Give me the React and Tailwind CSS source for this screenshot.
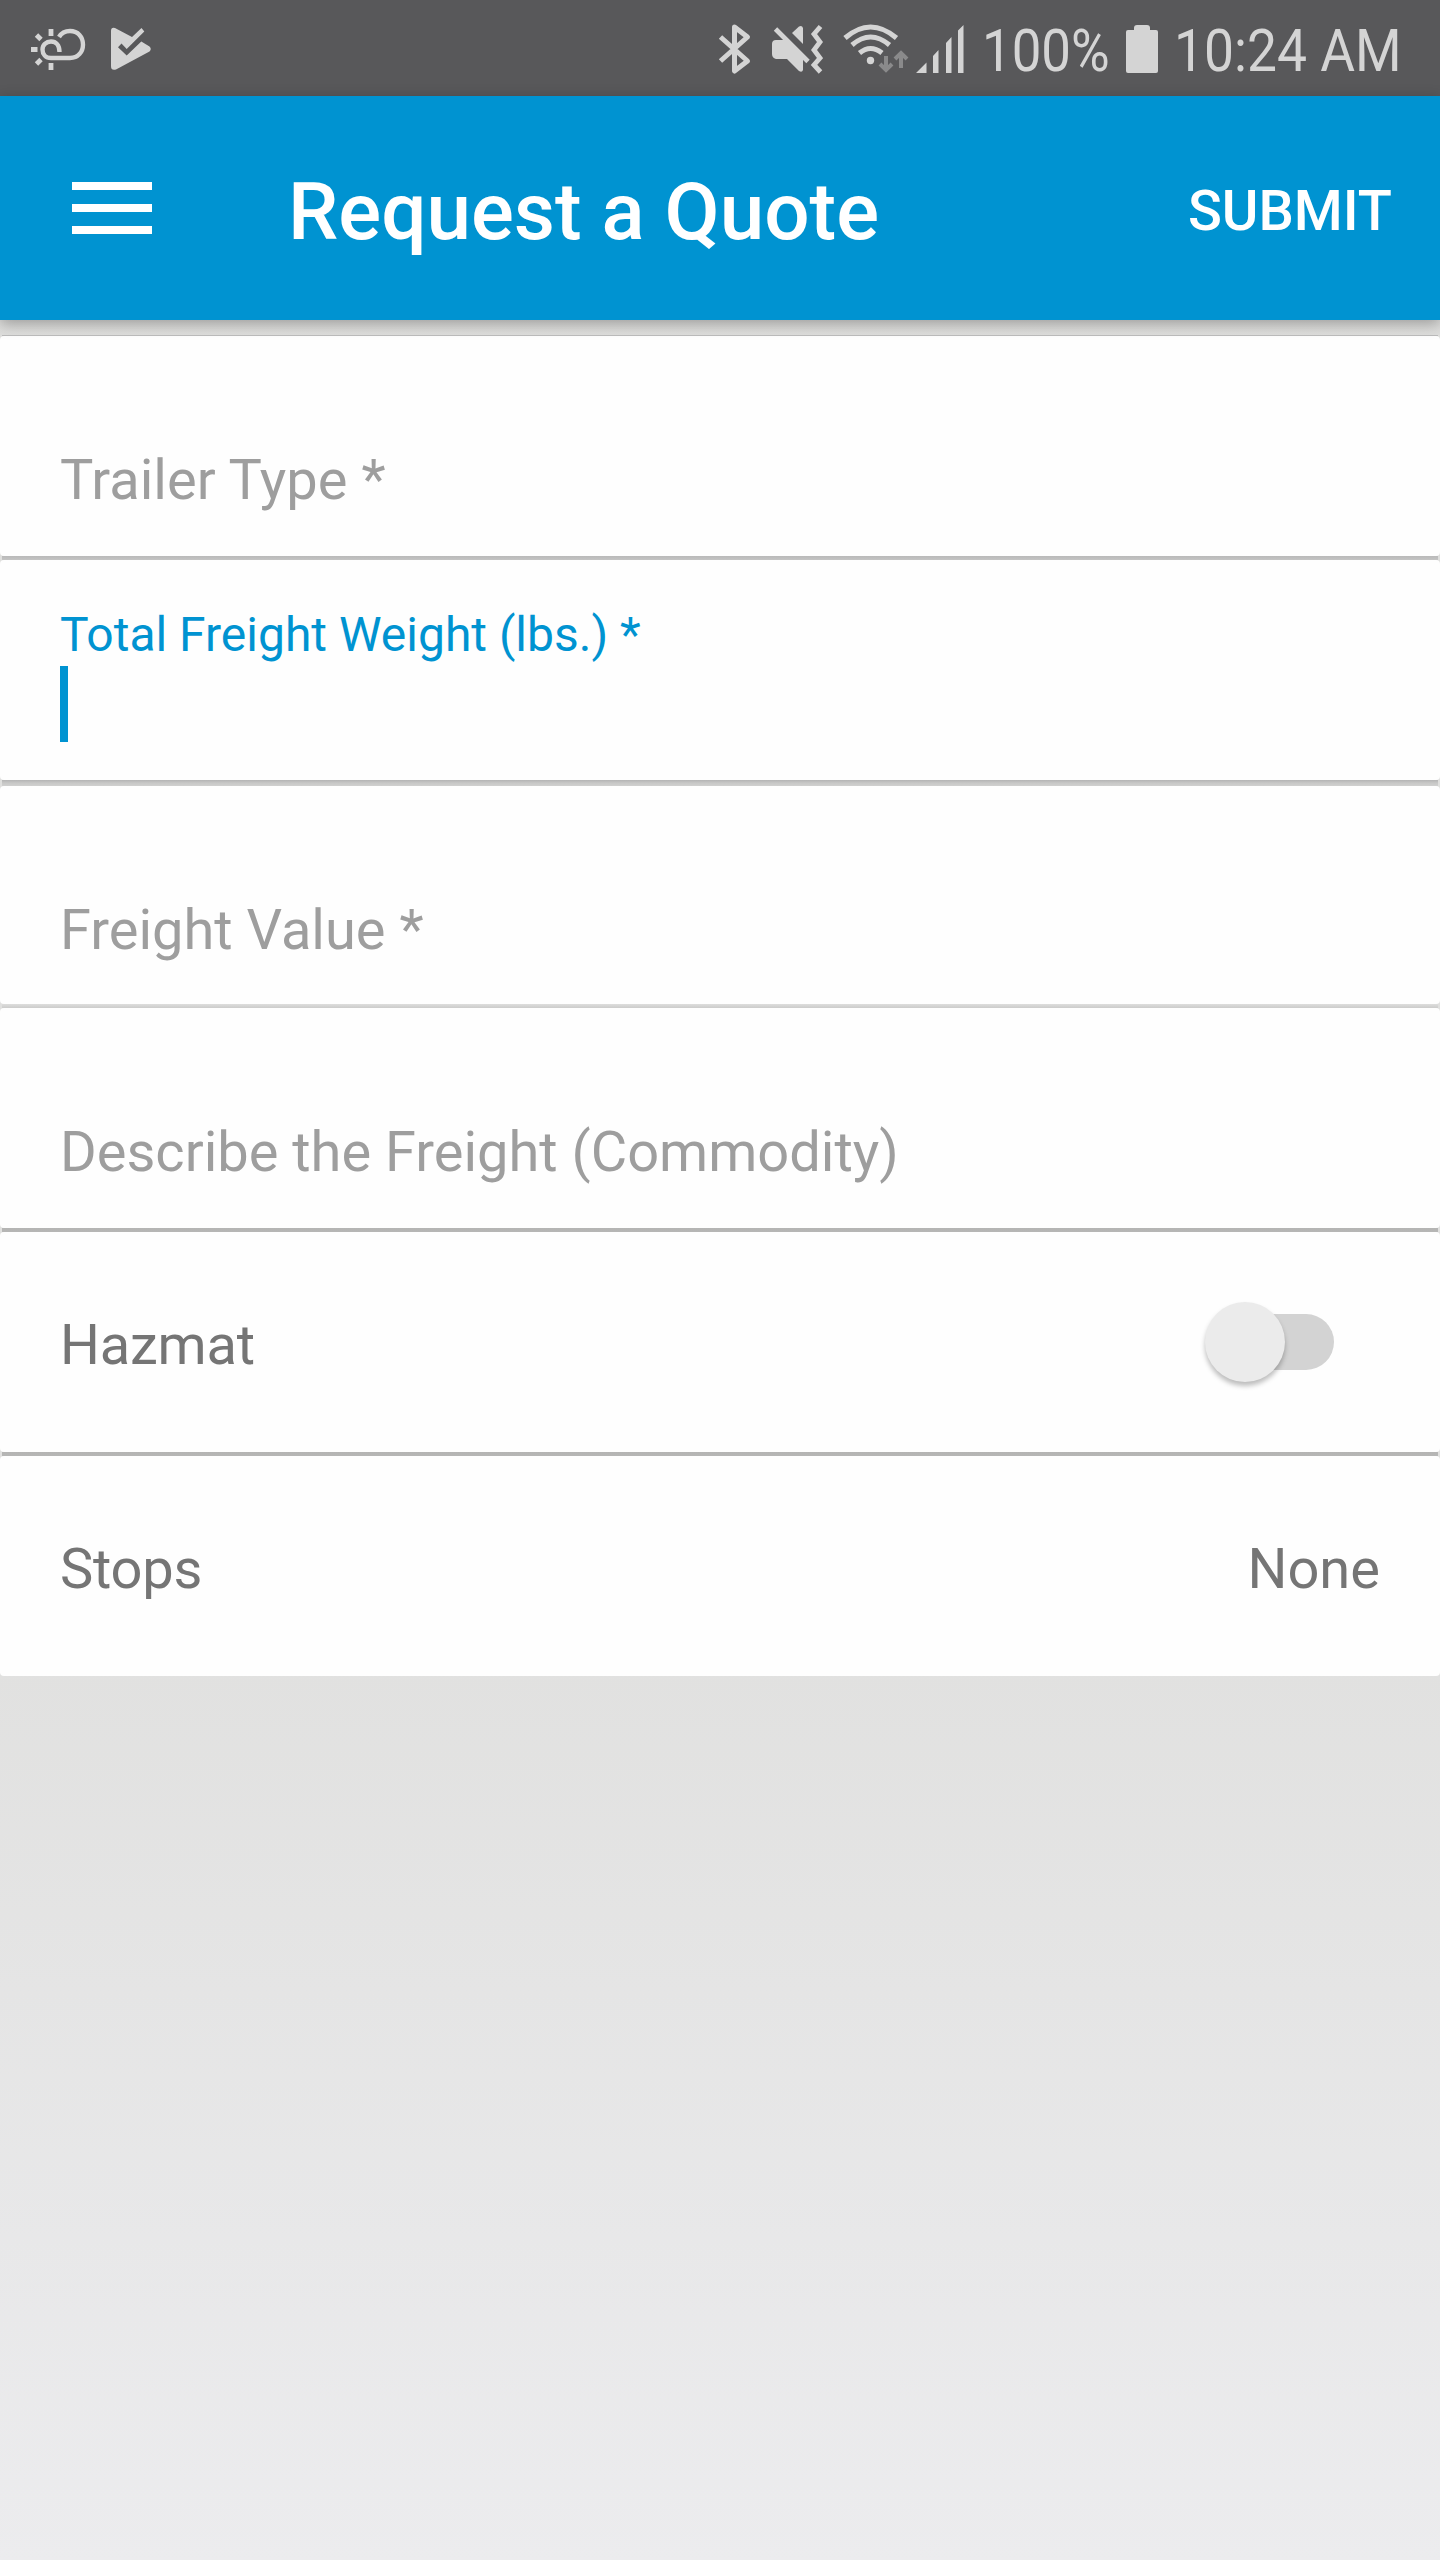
import React, { useState } from 'react';

const FIELDS = [
  { id: 'trailer', label: 'Trailer Type *', height: 'h-[220px]', divider: 'h-1 from-[#b9b9b9] to-[#c4c4c3]' },
  { id: 'weight', label: 'Total Freight Weight (lbs.) *', height: 'h-[220px]', divider: 'h-1.5 from-[#b4b4b4] via-[#c8c8c7] to-[#d0d0cf]' },
  { id: 'value', label: 'Freight Value *', height: 'h-[218px]', divider: 'h-1 from-[#dededd] to-[#cccccb]' },
  { id: 'commodity', label: 'Describe the Freight (Commodity)', height: 'h-[220px]', divider: 'h-1 from-[#b4b4b3] to-[#b6b6b5]' },
];

const WeatherIcon = () => (
  <svg width="56" height="44" viewBox="30 28 56 44" fill="none" stroke="#d4d4d4" strokeWidth="4.4">
    <path d="M59 37C62 32 66 31 70 31C78 31 83 37 83 44.500C83 52 78 58 70 58H51C45.500 58 42.500 54 42.500 49.500C42.500 45 46 41.500 51 41.500C56 41.500 59.500 45 59.500 52" />
    <path d="M51 29V36M51 63V70M31 49.500H37.500M36.500 35L41 39.500M36.500 64L41 59.500" strokeWidth="4.8" />
  </svg>
);

const PlayIcon = () => (
  <svg width="42" height="44" viewBox="110 27 42 44" fill="#d4d4d4">
    <path d="M111 31Q111 27 115 28L132 37L141.500 28L144.300 31.500L126.700 49L121.500 43.500L118 47.300L126.700 55.500L141.300 41.500L149.500 46.500Q152 49 149.500 51.500L116 69.500Q111 71 111 66Z" />
  </svg>
);

const BluetoothIcon = () => (
  <svg width="34" height="52" viewBox="718 23 34 52" fill="none" stroke="#d4d4d4" strokeWidth="5" strokeLinejoin="round">
    <path d="M720.500 37L747.500 61L734.500 71V27L747.500 37L720.500 61" />
  </svg>
);

const MuteIcon = () => (
  <svg width="52" height="50" viewBox="771 24 52 50" fill="#d4d4d4">
    <path d="M776 40H785L803 59V70Q802 73 799 71L787 59H776Q772 58 772 54V44Q772 40 776 40Z" />
    <path d="M792 33L799 26.500Q802 25 803 28V44Z" />
    <path d="M775.500 29L808 61.500" stroke="#d4d4d4" strokeWidth="4.8" />
    <path d="M820.500 26.500L814 34L820 42L814 50L820 58L814 65L820.500 72" fill="none" stroke="#d4d4d4" strokeWidth="4.8" />
  </svg>
);

const WifiIcon = () => (
  <svg width="66" height="50" viewBox="843 24 66 50" fill="none" stroke="#d4d4d4" strokeWidth="5">
    <path d="M845 38Q870.500 16 896.500 38M852 45Q870.500 29 889.500 45M859.500 53Q870.500 44 882 53" />
    <circle cx="870.5" cy="60.5" r="3.7" fill="#d4d4d4" stroke="none" />
    <path d="M886 56V69M880 64L886 70L892 64M901 68V54M895 59L901 53L907 59" stroke="#8a8a8b" strokeWidth="4" />
  </svg>
);

const SignalIcon = () => (
  <svg width="49" height="50" viewBox="915 24 49 50" fill="#d4d4d4">
    <path d="M916 73L926.500 62.500V73ZM933 73V56L938.500 50V73ZM946 73V43L951.500 37V73ZM958 73V30.500L963.500 25V73Z" />
  </svg>
);

const BatteryIcon = () => (
  <svg width="32" height="48" viewBox="0 0 32 48" fill="#d4d4d4">
    <rect x="8" width="16" height="10" rx="3" />
    <rect y="5" width="32" height="43" rx="2" />
  </svg>
);

const StatusBar = () => (
  <div className="flex h-24 items-start bg-[#58585a] text-[60px] leading-[72px] text-[#d4d4d4]">
    <div className="ml-[30px] mt-7"><WeatherIcon /></div>
    <div className="ml-6 mt-[27px]"><PlayIcon /></div>
    <div className="ml-auto mt-[23px]"><BluetoothIcon /></div>
    <div className="ml-[19px] mt-6"><MuteIcon /></div>
    <div className="ml-5 mt-6"><WifiIcon /></div>
    <div className="ml-1.5 mt-6"><SignalIcon /></div>
    <div className="ml-[18px] mt-[15px] w-[128px]">
      <span className="inline-block origin-left scale-x-[0.88] whitespace-nowrap">100%</span>
    </div>
    <div className="ml-4 mt-[25px]"><BatteryIcon /></div>
    <div className="ml-4 mr-[32px] mt-[15px] w-[234px]">
      <span className="inline-block origin-left scale-x-[0.89] whitespace-nowrap">10:24 AM</span>
    </div>
  </div>
);

const AppBar = () => (
  <header className="relative z-10 flex h-56 items-center bg-[#0093d1] pl-[72px] pr-[48px] text-white shadow-[0_4px_14px_rgba(0,0,0,0.3)]">
    <button aria-label="Menu" className="flex w-20 flex-col gap-3.5">
      <span className="h-2 bg-white" />
      <span className="h-2 bg-white" />
      <span className="h-2 bg-white" />
    </button>
    <h1 className="ml-[136px] mt-2 text-[80px] font-medium leading-none">Request a Quote</h1>
    <button className="ml-auto mt-1.5 text-[56px] font-medium leading-none">SUBMIT</button>
  </header>
);

const Card = ({ className = 'h-[220px]', children }) => (
  <div className={`flex rounded-[4px] bg-[#fefefe] px-[60px] ${className}`}>{children}</div>
);

// shadow strip between two stacked cards
const Divider = ({ className = 'h-1 from-[#b4b4b3] to-[#b6b6b5]' }) => (
  <div className={`mx-0.5 bg-linear-to-b ${className}`} />
);

const Field = ({ label, height, focused, onFocus }) => (
  <Card className={`flex-col ${height}`}>
    <div onClick={onFocus}>
      {focused ? (
        <>
          <p className="mt-[47px] text-[48px] leading-[56px] text-[#0093d1]">{label}</p>
          <div className="mt-[3px] h-[76px] w-2 bg-[#0093d1]" />
        </>
      ) : (
        <p className="mt-[111px] text-[56px] leading-[66px] text-[#9e9e9e]">{label}</p>
      )}
    </div>
  </Card>
);

const Toggle = ({ on, onChange }) => (
  <button
    role="switch"
    aria-checked={on}
    onClick={onChange}
    className="relative mr-[46px] mt-[82px] h-14 w-[122px] rounded-full bg-[#d3d3d3]"
  >
    <span
      className={`absolute top-[-12px] size-20 rounded-full bg-[#ebebeb] shadow-[0_4px_5px_rgba(0,0,0,0.26)] ${on ? 'right-0' : 'left-[-7px]'}`}
    />
  </button>
);

export default function App() {
  const [active, setActive] = useState('weight');
  const [hazmat, setHazmat] = useState(false);

  return (
    <div className="flex h-[2560px] w-[1440px] flex-col overflow-hidden bg-linear-to-b from-[#dededc] via-[#e1e1e0] via-[65%] to-[#ececee] font-[Roboto,sans-serif]">
      <StatusBar />
      <AppBar />
      <main className="flex flex-col pt-[15px]">
        <div className="mx-0.5 h-px bg-[#bcbcbc]" />
        {FIELDS.map((field) => (
          <React.Fragment key={field.id}>
            <Field
              label={field.label}
              height={field.height}
              focused={active === field.id}
              onFocus={() => setActive(field.id)}
            />
            <Divider className={field.divider} />
          </React.Fragment>
        ))}
        <Card className="h-[220px] items-start justify-between text-[56px] leading-[66px] text-[#757575]">
          <span className="mt-[80px] tracking-[-0.2px]">Hazmat</span>
          <Toggle on={hazmat} onChange={() => setHazmat(!hazmat)} />
        </Card>
        <Divider />
        <Card className="h-[220px] items-start justify-between text-[56px] leading-[66px] text-[#757575]">
          <span className="mt-[80px] tracking-[-0.2px]">Stops</span>
          <span className="mt-[80px]">None</span>
        </Card>
      </main>
    </div>
  );
}
